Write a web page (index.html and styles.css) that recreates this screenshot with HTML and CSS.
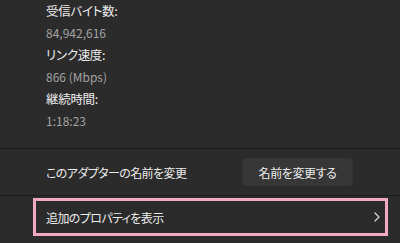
FILE: index.html
```html
<!DOCTYPE html>
<html lang="ja">
<head>
<meta charset="utf-8">
<link rel="stylesheet" href="styles.css">
</head>
<body>
<div class="panel">
  <dl class="props">
    <dt>受信バイト数:</dt>
    <dd>84,942,616</dd>
    <dt>リンク速度:</dt>
    <dd>866 (Mbps)</dd>
    <dt>継続時間:</dt>
    <dd>1:18:23</dd>
  </dl>
  <div class="row rename">
    <span class="row-text">このアダプターの名前を変更</span>
    <button class="btn">名前を変更する</button>
  </div>
  <div class="row more">
    <div class="highlight">
      <span class="row-text">追加のプロパティを表示</span>
      <svg class="chevron" width="10" height="12" viewBox="0 0 10 12"><path d="M3 2 L7 6 L3 10" fill="none" stroke="#d8d8d8" stroke-width="1.2" stroke-linecap="round" stroke-linejoin="round"/></svg>
    </div>
  </div>
</div>
</body>
</html>
```
FILE: styles.css
```css
html, body {
  margin: 0;
  padding: 0;
  background: #2b2b2b;
}
body {
  width: 400px;
  height: 243px;
  overflow: hidden;
  font-family: "Noto Sans CJK JP", "Noto Sans", sans-serif;
  font-feature-settings: "palt";
  font-size: 12px;
  color: #e6e6e6;
}
.panel {
  display: flex;
  flex-direction: column;
}
.props {
  margin: 0;
  padding: 0 0 16px 46px;
  height: 132px;
}
.props dt, .props dd {
  margin: 0;
  height: 22px;
  line-height: 22px;
}
.props dt {
  color: #ececec;
  font-size: 12.5px;
  letter-spacing: -0.3px;
}
.props dd {
  color: #a3a3a3;
}
.row {
  border-top: 1px solid #1d1d1d;
  display: flex;
  align-items: center;
}
.row-text {
  letter-spacing: -0.6px;
  color: #ececec;
}
.rename {
  height: 46px;
  padding: 0 47px 0 46px;
  justify-content: space-between;
}
.btn {
  width: 111px;
  height: 28px;
  border: 1px solid #333333;
  border-radius: 4px;
  background: #373737;
  color: #ececec;
  font-family: inherit;
  font-feature-settings: "palt";
  font-size: 12px;
  letter-spacing: -0.4px;
  padding: 0;
}
.more {
  height: 47px;
  align-items: flex-start;
  padding: 2px 0 0 33px;
}
.highlight {
  box-sizing: border-box;
  width: 355px;
  height: 38px;
  border: 3px solid #f3a9c6;
  display: flex;
  align-items: center;
  justify-content: space-between;
  padding: 0 3px 0 10px;
}
.chevron {
  display: block;
}
```
